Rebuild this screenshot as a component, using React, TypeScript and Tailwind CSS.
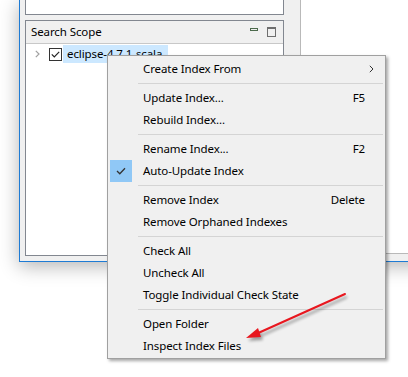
import React from 'react';

const font = { fontFamily: '"Noto Sans", "Open Sans", Arial, sans-serif' };

type Item = { label: string; key?: string; sub?: boolean; checked?: boolean } | 'sep';

const items: Item[] = [
  { label: 'Create Index From', sub: true },
  'sep',
  { label: 'Update Index...', key: 'F5' },
  { label: 'Rebuild Index...' },
  'sep',
  { label: 'Rename Index...', key: 'F2' },
  { label: 'Auto-Update Index', checked: true },
  'sep',
  { label: 'Remove Index', key: 'Delete' },
  { label: 'Remove Orphaned Indexes' },
  'sep',
  { label: 'Check All' },
  { label: 'Uncheck All' },
  { label: 'Toggle Individual Check State' },
  'sep',
  { label: 'Open Folder' },
  { label: 'Inspect Index Files' },
];

function ContextMenu() {
  return (
    <div className="absolute left-[107px] top-[55px] w-[279px] bg-[#f0f0f0] border border-[#a0a0a0] pt-[2px] pb-[1px] shadow-[2px_2px_3px_rgba(0,0,0,0.35)]">
      {items.map((it, i) => {
        if (it === 'sep') {
          return (
            <div key={i} className="h-[7px] flex items-center pl-[30px] pr-[2px]">
              <div className="h-px w-full bg-[#d4d4d4]" />
            </div>
          );
        }
        return (
          <div key={i} className="h-[22px] flex items-center relative text-[11.5px] tracking-[-0.1px] text-black">
            {it.checked && (
              <div className="absolute left-[2px] top-0 w-[22px] h-[22px] bg-[#90c8f6] flex items-center justify-center">
                <svg width="10" height="8" viewBox="0 0 10 8">
                  <path d="M1 4 L3.8 6.8 L9 1.2" fill="none" stroke="#333" strokeWidth="1.3" />
                </svg>
              </div>
            )}
            <span className="pl-[35px] flex-1 whitespace-nowrap">{it.label}</span>
            {it.key && <span className="pr-[20px]">{it.key}</span>}
            {it.sub && (
              <svg className="mr-[11px]" width="5" height="8" viewBox="0 0 5 8">
                <path d="M0.8 0.8 L4 4 L0.8 7.2" fill="none" stroke="#333" strokeWidth="1" />
              </svg>
            )}
          </div>
        );
      })}
    </div>
  );
}

function RedArrow() {
  return (
    <svg className="absolute left-0 top-0" width="408" height="377" viewBox="0 0 408 377">
      <defs>
        <filter id="sh" x="-20%" y="-20%" width="140%" height="140%">
          <feGaussianBlur stdDeviation="1.5" />
        </filter>
      </defs>
      <g transform="translate(2,3)" filter="url(#sh)" opacity="0.35">
        <line x1="345" y1="294" x2="256" y2="334" stroke="#000" strokeWidth="2" />
        <path d="M246 338 L258 328 L261 337 Z" fill="#000" />
      </g>
      <line x1="345" y1="294" x2="256" y2="334" stroke="#e8171f" strokeWidth="2" strokeLinecap="round" />
      <path d="M246 338 L258 328 L261 337 Z" fill="#e8171f" />
    </svg>
  );
}

export default function App() {
  return (
    <div className="relative w-[408px] h-[377px] bg-white overflow-hidden" style={font}>
      <div className="pl-[19px]">
        <div className="flex h-[262px] w-[420px] border-l border-b border-[#1e7bd4] bg-[#f0f0f0] shadow-[0_4px_18px_rgba(0,0,0,0.3)]">
          {/* left column with views */}
          <div className="w-[281px] flex flex-col pl-[5px] pr-[16px] border-r border-[#b9b9b9]">
            <div className="h-[15px] bg-white border-l border-r border-b border-[#828790]" />
            <div className="mt-[5px] h-[236px] flex flex-col border border-[#828790] bg-white">
              <div className="h-[23px] flex items-center justify-between bg-[#f0f0f0] border-b border-[#c8c8c8] pl-[5px] pr-[7px] text-[11.5px] tracking-[-0.1px] text-black">
                <span>Search Scope</span>
                <div className="flex items-center gap-[9px]">
                  <div className="w-[8px] h-[3px] border border-[#4c6a4c] mb-[5px]" />
                  <div className="w-[9px] h-[10px] border border-[#6e6e6e] border-t-2" />
                </div>
              </div>
              <div className="h-[18px] flex items-center pl-[9px] mt-[1px]">
                <svg width="5" height="8" viewBox="0 0 5 8">
                  <path d="M0.8 0.8 L4 4 L0.8 7.2" fill="none" stroke="#a0a0a0" strokeWidth="1.2" />
                </svg>
                <div className="ml-[9px] w-[13px] h-[13px] border border-[#333] bg-white flex items-center justify-center">
                  <svg width="9" height="7" viewBox="0 0 9 7">
                    <path d="M0.8 3.4 L3.3 5.9 L8.2 0.8" fill="none" stroke="#222" strokeWidth="1.2" />
                  </svg>
                </div>
                <div className="ml-[1px] h-[18px] bg-[#cce8ff] pl-[4px] pr-[6px] flex items-center text-[11.5px] tracking-[-0.1px] text-black whitespace-nowrap">
                  eclipse-4.7.1-scala
                </div>
              </div>
            </div>
          </div>
          {/* editor area */}
          <div className="flex-1 flex flex-col">
            <div className="h-[254px] bg-white border-b border-[#b9b9b9]" />
          </div>
        </div>
      </div>
      <ContextMenu />
      <RedArrow />
    </div>
  );
}
